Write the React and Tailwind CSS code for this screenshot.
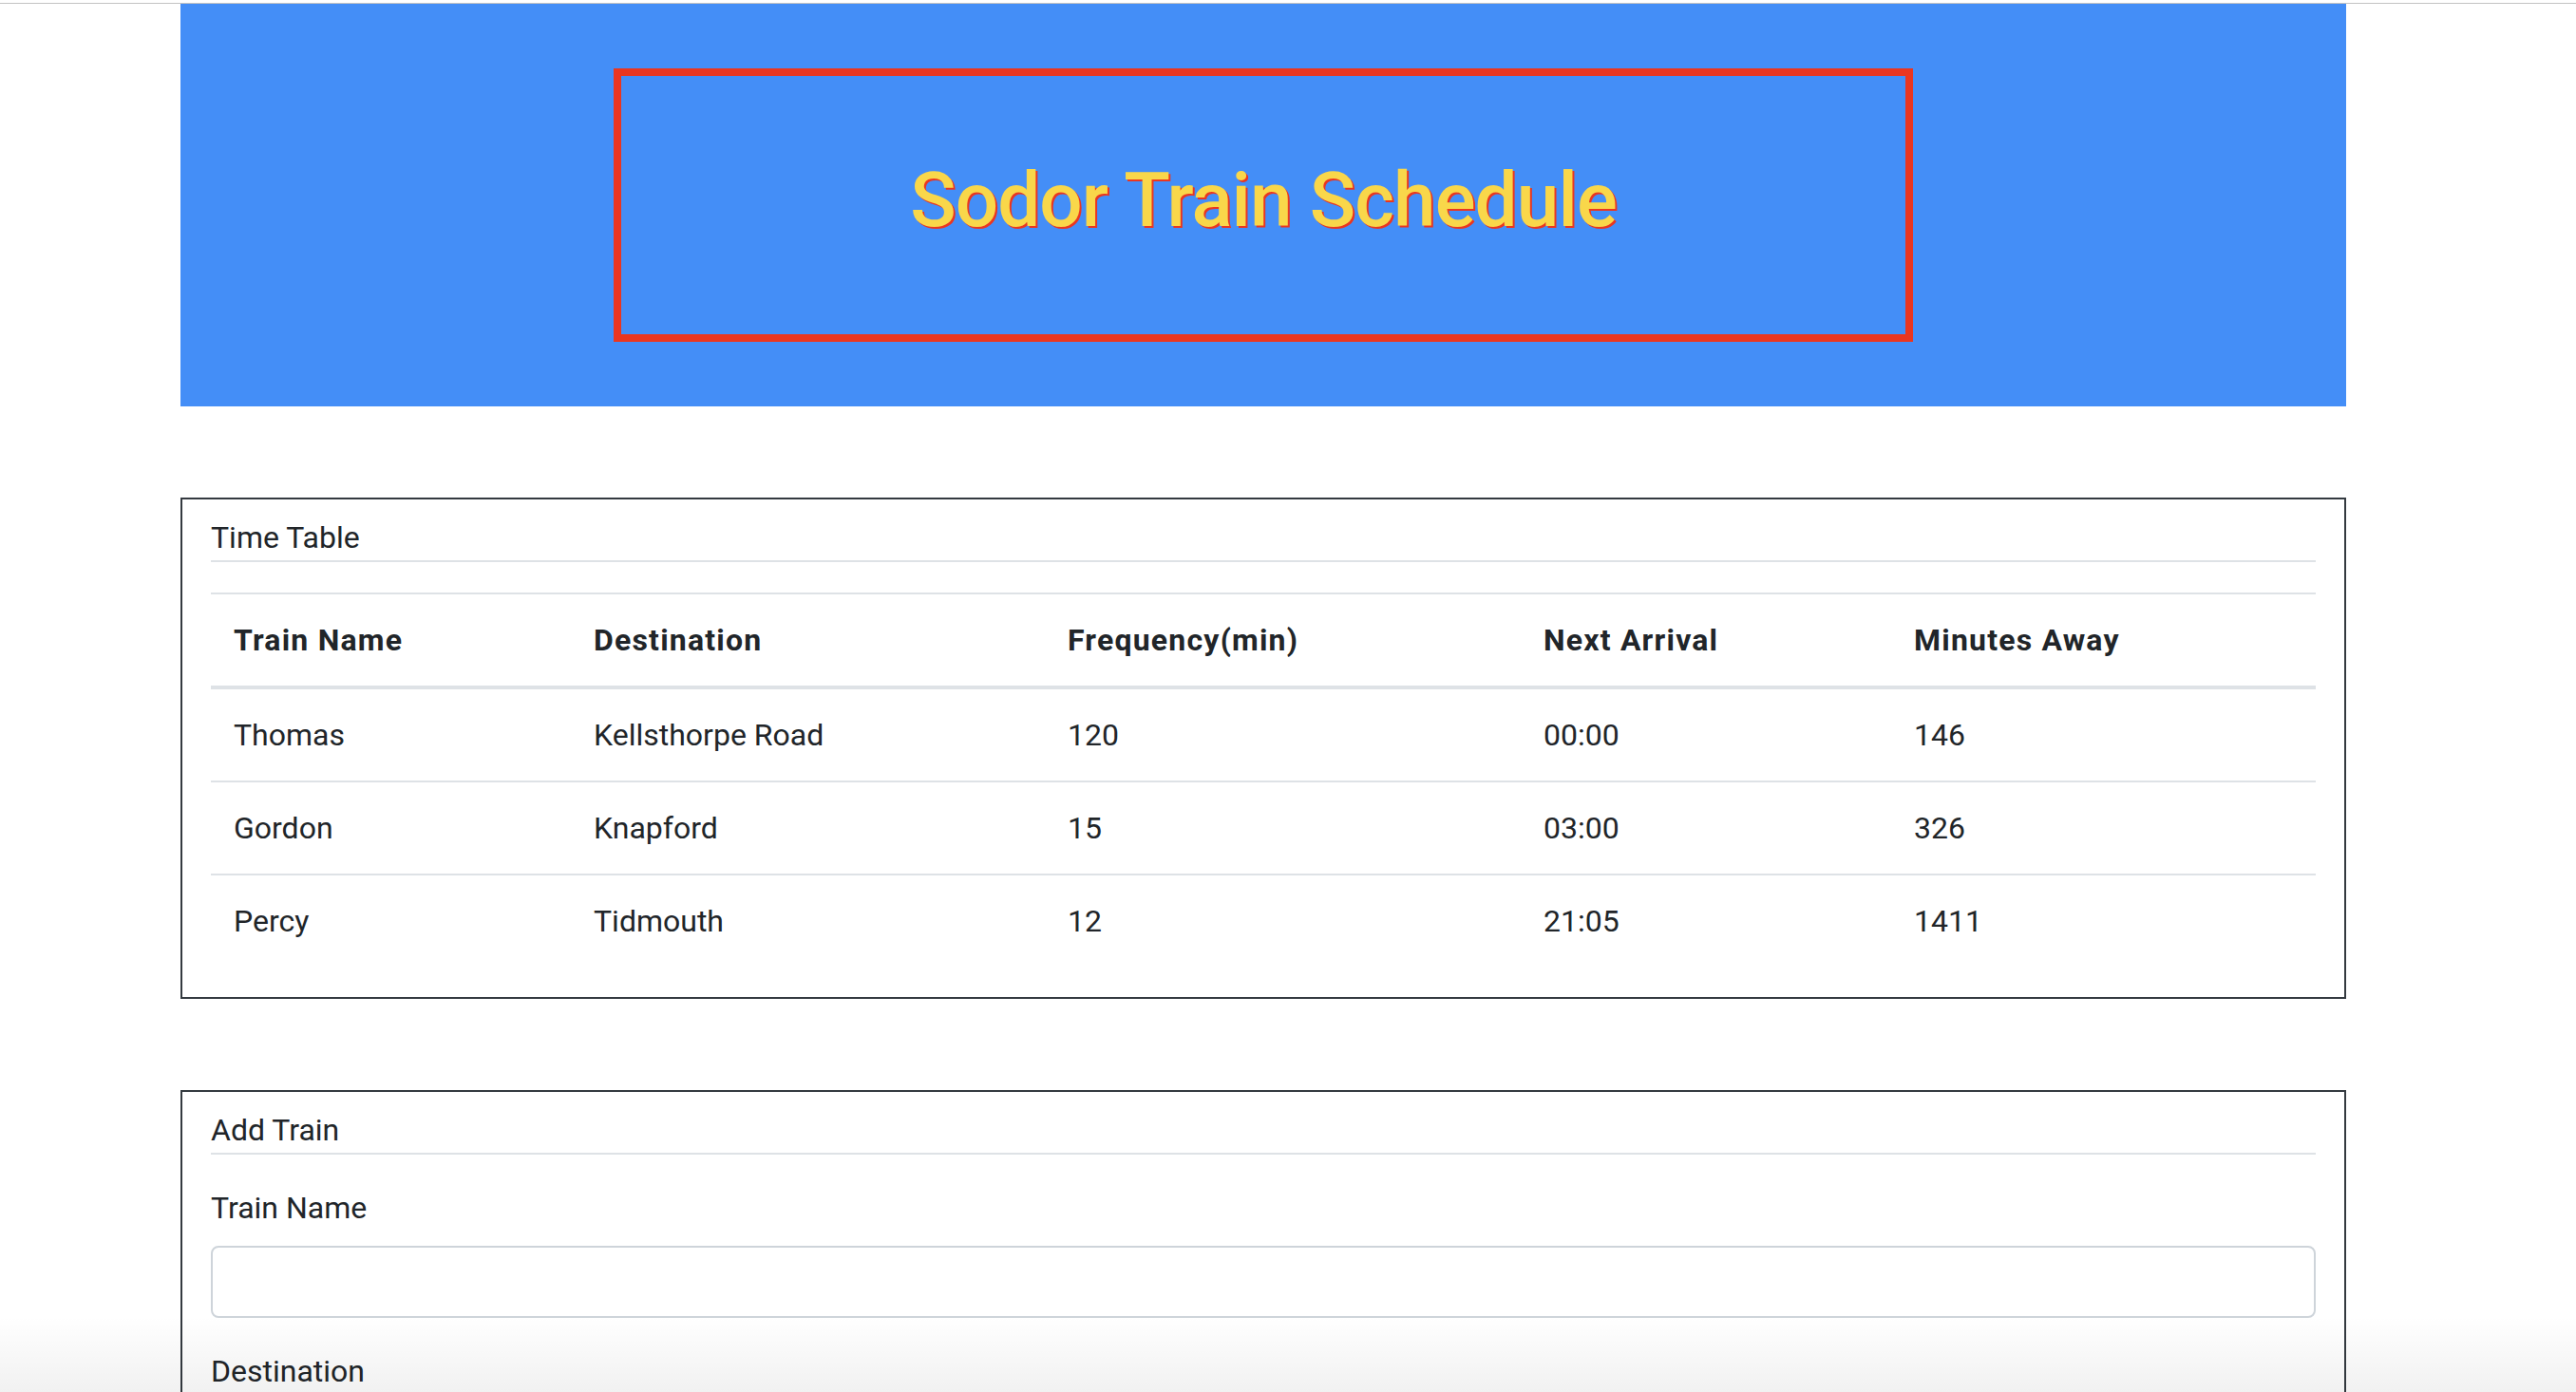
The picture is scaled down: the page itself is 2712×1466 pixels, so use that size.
import React from "react";

const rows = [
  ["Thomas", "Kellsthorpe Road", "120", "00:00", "146"],
  ["Gordon", "Knapford", "15", "03:00", "326"],
  ["Percy", "Tidmouth", "12", "21:05", "1411"],
];

function Field({ label }) {
  return (
    <div className="mb-[32px]">
      <label className="block text-[32px] leading-[48px] mb-[16px]">{label}</label>
      <input
        type="text"
        className="block w-full h-[76px] border-2 border-[#ced4da] rounded-[8px] bg-white px-[24px] text-[32px] outline-none"
      />
    </div>
  );
}

const th = "text-left font-bold tracking-[1.2px] px-[24px] py-[24px] border-t-2 border-b-4 border-[#dee2e6]";

export default function App() {
  return (
    <div className="relative h-screen overflow-hidden bg-white font-['Roboto','Liberation_Sans',sans-serif] text-[#212529]">
      <div className="h-[3px]" />
      <div className="h-px bg-[#c3c3c3]" />
      <div className="ml-[190px] w-[2280px]">
        <div className="bg-[#448ef7] py-[68px] flex justify-center">
          <div className="w-[60%] h-[288px] border-[8px] border-[#ea3620] flex items-center justify-center">
            <h1 className="mb-[10px] font-['Roboto','Liberation_Sans',sans-serif] font-medium text-[80px] leading-[1.2] tracking-[-0.9px] text-[#f9d74a] [text-shadow:2px_2px_0_#ea3620]">
              Sodor Train Schedule
            </h1>
          </div>
        </div>

        <div className="mt-[96px] border-2 border-[#343a40] px-[30px] pt-[16px]">
          <div className="text-[32px] leading-[48px] border-b-2 border-[#dee2e6]">Time Table</div>
          <table className="mt-[32px] mb-[32px] w-full table-fixed border-collapse text-[32px] leading-[48px]">
            <thead>
              <tr>
                <th className={"w-[379px] " + th}>Train Name</th>
                <th className={"w-[499px] " + th}>Destination</th>
                <th className={"w-[501px] " + th}>Frequency(min)</th>
                <th className={"w-[390px] " + th}>Next Arrival</th>
                <th className={th}>Minutes Away</th>
              </tr>
            </thead>
            <tbody>
              {rows.map((r, i) => (
                <tr key={r[0]} className={i === 0 ? "" : "border-t-2 border-[#dee2e6]"}>
                  {r.map((c, j) => (
                    <td key={j} className="px-[24px] py-[24px] font-normal">{c}</td>
                  ))}
                </tr>
              ))}
            </tbody>
          </table>
        </div>

        <div className="mt-[96px] border-2 border-[#343a40] px-[30px] pt-[16px]">
          <div className="text-[32px] leading-[48px] border-b-2 border-[#dee2e6] mb-[32px]">Add Train</div>
          <Field label="Train Name" />
          <Field label="Destination" />
          <Field label="First Train Time (HH:mm - military time)" />
          <Field label="Frequency (min)" />
        </div>
      </div>
      <div className="pointer-events-none absolute bottom-0 left-0 right-0 h-[80px] bg-linear-to-b from-transparent to-[rgba(0,0,0,0.055)]" />
    </div>
  );
}
